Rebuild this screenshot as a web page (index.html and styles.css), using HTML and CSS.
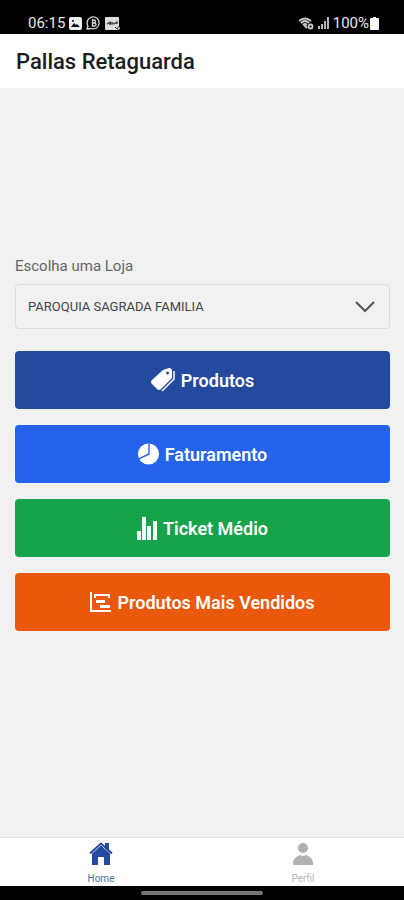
FILE: index.html
```
<!DOCTYPE html>
<html lang="pt-BR">
<head>
	<meta charset="utf-8">
	<meta name="viewport" content="width=device-width, initial-scale=1">
	<title>Pallas Retaguarda</title>
	<link rel="stylesheet" href="styles.css">
</head>
<body>
	<div class="status-bar">
		<div class="status-group">
			<span class="clock">06:15</span>
			<svg width="13" height="13" viewBox="0 0 13 13">
				<rect width="13" height="13" rx="2" fill="#eee"/>
				<path d="M2 10l3-4 2 2 1-1 3 3z" fill="#111"/>
				<circle cx="4" cy="4" r="1" fill="#111"/>
			</svg>
			<svg width="15" height="14" viewBox="0 0 15 14">
				<path d="M1 13l1-3a6 6 0 1 1 3 2.500z" fill="none" stroke="#ddd" stroke-width="1.300" stroke-linejoin="round"/>
				<path d="M6.500 4h1.500a1.500 1.500 0 0 1 0 3H6.500zM6.500 7H8.500a1.500 1.500 0 0 1 0 3h-2z" fill="none" stroke="#ddd" stroke-width="1.300"/>
			</svg>
			<svg width="15" height="13" viewBox="0 0 15 13">
				<path d="M1 0h12q1 0 1 1v8l1 3-3 1H1q-1 0-1-1V1q0-1 1-1z" fill="#ddd"/>
				<path d="M2 7l3-2v3M6 5v2h2V5M9 7l3-2v2" fill="none" stroke="#333" stroke-width="1.200"/>
				<path d="M10 10l2 2 2-3" fill="none" stroke="#333"/>
			</svg>
		</div>
		<div class="status-group">
			<svg width="16" height="13" viewBox="0 0 16 13">
				<path d="M1 4q6-5 12 0M3 6q4-4 8 0M5 8q2-2 4 0" fill="none" stroke="#ccc" stroke-width="1.800"/>
				<path d="M6 8l3 3" fill="none" stroke="#ccc" stroke-width="2"/>
				<circle cx="12.500" cy="9.500" r="2" fill="none" stroke="#ccc" stroke-width="1.800"/>
			</svg>
			<svg width="11" height="12" viewBox="0 0 11 12">
				<path d="M1 12V9M4 12V7M7 12V4M10 12V0" stroke="#ccc" stroke-width="1.800"/>
			</svg>
			<span class="battery">100%
				<svg width="9" height="13" viewBox="0 0 9 13">
					<path d="M3 0h3v1h2q1 0 1 1v10q0 1-1 1H1q-1 0-1-1V2q0-1 1-1h2z" fill="#fff"/>
				</svg>
			</span>
		</div>
	</div>

	<header class="header">
		<h1>Pallas Retaguarda</h1>
	</header>

	<main class="content">
		<label class="label" for="loja">Escolha uma Loja</label>
		<div class="select-group">
			<select id="loja" class="select">
				<option>PAROQUIA SAGRADA FAMILIA</option>
			</select>
			<svg class="arrow" width="20" height="12" viewBox="0 0 20 12">
				<path d="M1 1l9 9 9-9" fill="none" stroke="#555" stroke-width="2"/>
			</svg>
		</div>
		<div class="menu">
			<button type="button" class="btn btn-produtos">
				<svg width="24" height="24" viewBox="0 0 24 24">
					<path d="M12 2l6-2q3 0 3 3v7L10 21q-2 2-4 0l-5-5q-2-2 0-4z" fill="#fff"/>
					<circle cx="16.500" cy="5" r="1.500" fill="#234a9f"/>
					<path d="M23 3v8L11 23" fill="none" stroke="#fff" stroke-width="1.500"/>
				</svg>
				Produtos
			</button>
			<button type="button" class="btn btn-faturamento">
				<svg width="21" height="22" viewBox="0 0 22 22">
					<circle cx="11" cy="11" r="11" fill="#fff"/>
					<path d="M11.500 0v11L1 16" fill="none" stroke="#2563eb" stroke-width="1.500"/>
				</svg>
				Faturamento
			</button>
			<button type="button" class="btn btn-ticket">
				<svg width="20" height="23" viewBox="0 0 20 23">
					<path d="M0 14h4v9H0zM5 0h4v23H5zM10 9h4v14h-4zM16 4h4v19h-4z" fill="#fff"/>
				</svg>
				Ticket Médio
			</button>
			<button type="button" class="btn btn-vendidos">
				<svg width="21" height="20" viewBox="0 0 21 20">
					<path d="M1 0v19h20" fill="none" stroke="#fff" stroke-width="2"/>
					<path d="M4 2h16v4h-2V4H6v2H4zM6 8h9v3H6zM10 13h10v3H10z" fill="#fff"/>
				</svg>
				Produtos Mais Vendidos
			</button>
		</div>
	</main>

	<nav class="tabs">
		<a href="#home" class="tab active">
			<svg width="24" height="24" viewBox="0 0 24 24">
				<path d="M16 1h4v9h-4z" fill="#234a9f"/>
				<path d="M3 11l9-8 9 8v12h-6v-8H9v8H3z" fill="#234a9f"/>
				<path d="M1 13L12 3l11 10" fill="none" stroke="#fff" stroke-width="1"/>
				<path d="M1 11.500L12 1.500l11 10" fill="none" stroke="#234a9f" stroke-width="2"/>
			</svg>
			Home
		</a>
		<a href="#perfil" class="tab">
			<svg width="24" height="24" viewBox="0 0 24 24">
				<circle cx="12" cy="6" r="5" fill="#b0b0b0"/>
				<path d="M2 23v-2c0-4 4-7 7-8q3 2 6 0c3 1 7 4 7 8v2z" fill="#b0b0b0"/>
			</svg>
			Perfil
		</a>
	</nav>
	<div class="gesture-bar"><span></span></div>
</body>
</html>
```
FILE: styles.css
```
*{
	box-sizing: border-box;
}
body{
	margin: 0;
	min-height: 100vh;
	display: flex;
	flex-direction: column;
	background-color: #f1f1f1;
	font-family: Roboto, "Liberation Sans", sans-serif;
}
svg{
	flex: none;
}
.status-bar{
	display: flex;
	justify-content: space-between;
	height: 34px;
	padding: 12px 25px 0 28px;
	background-color: #000;
	color: #e8e8e8;
	font-size: 15px;
	line-height: 20px;
}
.status-group{
	display: flex;
	align-items: center;
	gap: 4px;
}
.battery{
	display: flex;
	align-items: center;
	gap: 1px;
}
.header{
	padding: 15px 16px 13px;
	background-color: #fff;
}
.header h1{
	margin: 0;
	color: #1c1c1e;
	font-size: 22px;
	font-weight: 500;
	line-height: 26px;
}
.content{
	flex: 1;
	display: flex;
	flex-direction: column;
	justify-content: center;
	padding: 0 14px 38px 15px;
}
.label{
	margin-bottom: 8px;
	color: #666;
	font-size: 15px;
	line-height: 20px;
}
.select-group{
	position: relative;
	margin-bottom: 22px;
}
.select{
	display: block;
	width: 100%;
	height: 45px;
	padding: 0 40px 0 12px;
	appearance: none;
	border: 1px solid #dcdcdc;
	border-radius: 4px;
	background-color: #f1f1f1;
	color: #444;
	font-family: inherit;
	font-size: 13px;
}
.arrow{
	position: absolute;
	top: 17px;
	right: 15px;
	pointer-events: none;
}
.menu{
	display: flex;
	flex-direction: column;
	gap: 16px;
}
.btn{
	display: flex;
	align-items: center;
	justify-content: center;
	gap: 6px;
	height: 58px;
	padding: 0 12px;
	border: 0;
	border-radius: 4px;
	color: #fff;
	font-family: inherit;
	font-size: 18px;
	font-weight: 600;
}
.btn-produtos{
	background-color: #234a9f;
}
.btn-faturamento{
	background-color: #2563eb;
}
.btn-ticket{
	background-color: #16a34a;
}
.btn-vendidos{
	background-color: #ea580c;
}
.tabs{
	display: flex;
	height: 49px;
	border-top: 1px solid #e4e4e4;
	background-color: #fff;
}
.tab{
	flex: 1;
	display: flex;
	flex-direction: column;
	align-items: center;
	gap: 7px;
	padding-top: 4px;
	color: #b8b8b8;
	font-size: 10px;
	line-height: 12px;
	text-decoration: none;
}
.active{
	color: #4a6fa8;
}
.gesture-bar{
	display: flex;
	justify-content: center;
	height: 14px;
	padding-top: 5px;
	background-color: #000;
}
.gesture-bar span{
	width: 30%;
	height: 4px;
	border-radius: 2px;
	background-color: #777;
}
```
